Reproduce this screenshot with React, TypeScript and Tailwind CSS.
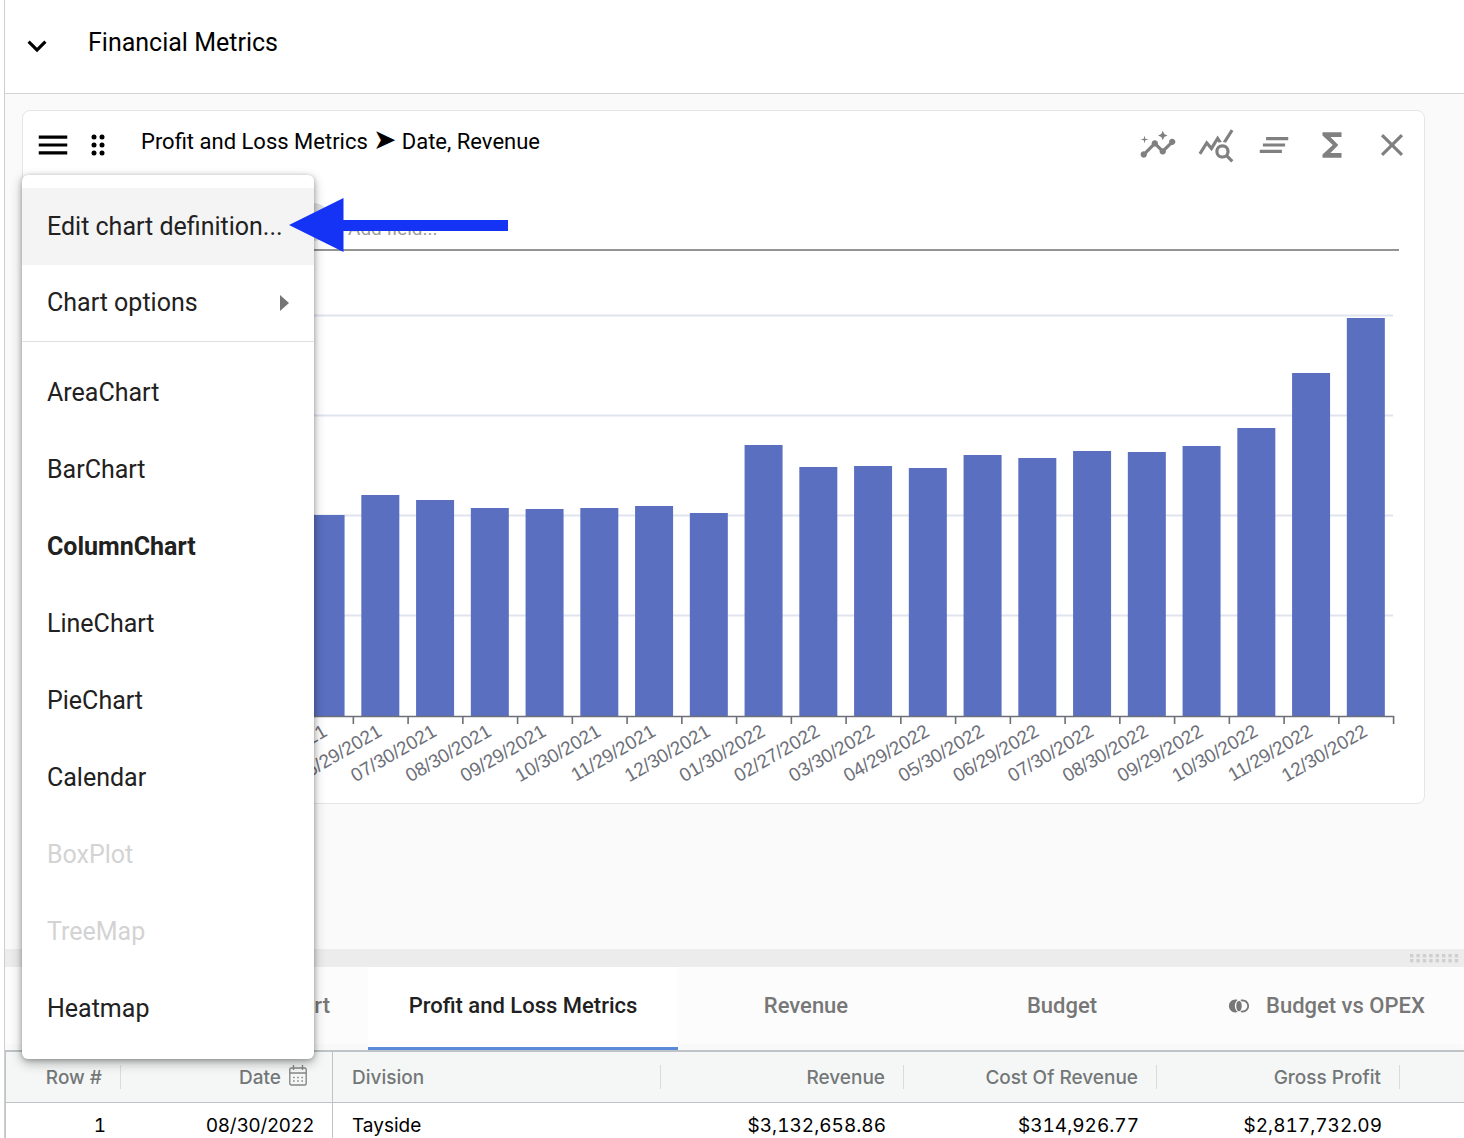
import React from "react";
import {
  MdInsights,
  MdQueryStats,
  MdClearAll,
  MdFunctions,
  MdClose,
  MdJoinLeft,
  MdMenu,
  MdExpandMore,
} from "react-icons/md";

type Bar = { date: string; top: number };

const bars: Bar[] = [
  { date: "01/30/2021", top: 530 },
  { date: "02/27/2021", top: 526 },
  { date: "03/30/2021", top: 522 },
  { date: "04/29/2021", top: 518 },
  { date: "05/30/2021", top: 515 },
  { date: "06/29/2021", top: 495 },
  { date: "07/30/2021", top: 500 },
  { date: "08/30/2021", top: 508 },
  { date: "09/29/2021", top: 509 },
  { date: "10/30/2021", top: 508 },
  { date: "11/29/2021", top: 506 },
  { date: "12/30/2021", top: 513 },
  { date: "01/30/2022", top: 445 },
  { date: "02/27/2022", top: 467 },
  { date: "03/30/2022", top: 466 },
  { date: "04/29/2022", top: 468 },
  { date: "05/30/2022", top: 455 },
  { date: "06/29/2022", top: 458 },
  { date: "07/30/2022", top: 451 },
  { date: "08/30/2022", top: 452 },
  { date: "09/29/2022", top: 446 },
  { date: "10/30/2022", top: 428 },
  { date: "11/29/2022", top: 373 },
  { date: "12/30/2022", top: 318 },
];

const AXIS_LEFT = 80;
const AXIS_RIGHT = 1394;
const AXIS_Y = 716;
const STEP = (AXIS_RIGHT - AXIS_LEFT) / bars.length;

function ColumnChart() {
  return (
    <svg
      viewBox="23 251 1401 552"
      className="block w-full overflow-visible"
      role="img"
      aria-label="Revenue by date"
    >
      {[315, 415, 515, 615].map((y) => (
        <line key={y} x1={AXIS_LEFT} x2={1393} y1={y + 0.5} y2={y + 0.5} stroke="#e0e4ee" strokeWidth="2" />
      ))}
      {bars.map((bar, i) => (
        <rect
          key={bar.date}
          x={AXIS_LEFT + STEP * (i + 0.5) - 19.8}
          y={bar.top}
          width="38"
          height={AXIS_Y - bar.top}
          fill="#5a6fc0"
        />
      ))}
      <line x1={AXIS_LEFT} x2={AXIS_RIGHT} y1={716.5} y2={716.5} stroke="#6e7079" strokeWidth="1.6" />
      {Array.from({ length: bars.length + 1 }, (_, i) => {
        const x = AXIS_LEFT + STEP * i - 0.4;
        return <line key={i} x1={x} x2={x} y1="716" y2="724" stroke="#6e7079" strokeWidth="1.6" />;
      })}
      {bars.map((bar, i) => (
        <text
          key={bar.date}
          transform={`translate(${AXIS_LEFT + STEP * (i + 0.5) + 2} 735) rotate(-30)`}
          textAnchor="end"
          fill="#6e7079"
          className="font-['Liberation_Sans',sans-serif] text-[19px]"
        >
          {bar.date}
        </text>
      ))}
    </svg>
  );
}

function DragDots() {
  return (
    <svg width="14" height="22" viewBox="0 0 14 22" aria-hidden="true">
      {[3, 11].map((x) => [3, 11, 19].map((y) => <circle key={`${x}-${y}`} cx={x} cy={y} r="2.5" />))}
    </svg>
  );
}

function CalendarIcon() {
  return (
    <svg
      className="-mt-1.5"
      width="18"
      height="21"
      viewBox="0 0 18 21"
      fill="none"
      stroke="#858888"
      strokeWidth="1.4"
      aria-hidden="true"
    >
      <rect x="0.8" y="3" width="16.4" height="17" rx="1.5" />
      <path d="M0.8 8H17.2M4.5 0V5M13.5 0V5" />
      <path d="M4 12.5H14.5M4 16H14.5" strokeWidth="1.6" strokeDasharray="1.6 2.6" />
    </svg>
  );
}

function GripDots() {
  return (
    <svg width="49" height="9" viewBox="0 0 49 9" fill="#cfcfcf" aria-hidden="true">
      {[0, 1, 2, 3, 4, 5, 6, 7].map((i) =>
        [0, 5].map((y) => <rect key={`${i}-${y}`} x={i * 6.4} y={y} width="3.4" height="3.4" />)
      )}
    </svg>
  );
}

function MenuItem({ label, bold, disabled }: { label: string; bold?: boolean; disabled?: boolean }) {
  return (
    <button
      role="menuitem"
      disabled={disabled}
      className={`flex h-[77px] w-full items-center px-[25px] text-left text-[25px] ${
        bold ? "font-bold" : ""
      } ${disabled ? "text-[#d3d3d3]" : "text-[#212121]"}`}
    >
      {label}
    </button>
  );
}

function ChartMenu() {
  return (
    <div
      role="menu"
      className="absolute top-16 -left-px z-10 w-[292px] rounded-md bg-white pt-[13px] pb-3 shadow-[0_4px_12px_rgba(0,0,0,0.3),0_1px_5px_rgba(0,0,0,0.25)]"
    >
      <div className="relative">
        <button
          role="menuitem"
          className="flex h-[77px] w-full items-center bg-[#f4f4f4] px-[25px] text-left text-[25px] whitespace-nowrap text-[#212121]"
        >
          Edit chart definition...
        </button>
        <svg
          className="absolute top-[10px] left-[267px]"
          width="219"
          height="54"
          viewBox="0 0 219 54"
          fill="#1433f5"
          aria-hidden="true"
        >
          <path d="M0 27L54.5 0V22H219V33H54.5V54Z" />
        </svg>
      </div>
      <button
        role="menuitem"
        className="flex h-[77px] w-full items-center justify-between border-b border-[#dedede] px-[25px] text-[25px] text-[#212121]"
      >
        Chart options
        <svg width="9" height="16" viewBox="0 0 9 16" fill="#757575" aria-hidden="true">
          <path d="M0 0L9 8L0 16Z" />
        </svg>
      </button>
      <div className="pt-3">
        <MenuItem label="AreaChart" />
        <MenuItem label="BarChart" />
        <MenuItem label="ColumnChart" bold />
        <MenuItem label="LineChart" />
        <MenuItem label="PieChart" />
        <MenuItem label="Calendar" />
        <MenuItem label="BoxPlot" disabled />
        <MenuItem label="TreeMap" disabled />
        <MenuItem label="Heatmap" />
      </div>
    </div>
  );
}

function ChartCard() {
  return (
    <section className="relative mr-[39px] ml-[17px] rounded-lg border border-[#e6e6e6] bg-white">
      <header className="flex h-[68px] items-center pr-[13px] pl-[11px]">
        <button aria-label="Chart menu" aria-haspopup="menu">
          <MdMenu size={38} />
        </button>
        <button aria-label="Move chart" className="ml-[19px]">
          <DragDots />
        </button>
        <h2 className="ml-9 pb-2 text-[22px]">
          Profit and Loss Metrics <span className="text-[28px] leading-none">➤</span> Date, Revenue
        </h2>
        <div className="ml-auto flex items-center gap-5 text-[#808080]">
          <button aria-label="Insights"><MdInsights size={38} /></button>
          <button aria-label="Query statistics"><MdQueryStats size={38} /></button>
          <button aria-label="Clear all"><MdClearAll size={38} /></button>
          <button aria-label="Totals"><MdFunctions size={38} /></button>
          <button aria-label="Close" className="pl-0.5"><MdClose size={38} /></button>
        </div>
      </header>
      <div className="mr-[25px] ml-6 flex h-[72px] items-end border-b-2 border-[#949494] pb-2">
        <span className="h-[38px] w-[285px] rounded-full bg-[#e0e0e0]" />
        <input
          aria-label="Add field"
          placeholder="Add field..."
          className="ml-4 h-6 flex-1 text-[19px] outline-none placeholder:text-[#9b9b9b]"
        />
      </div>
      <ColumnChart />
      <ChartMenu />
    </section>
  );
}

const tabClass =
  "flex min-w-[256px] shrink-0 items-center justify-center border-b-[6px] border-[#f9f9f9] px-[38px] text-[22px] font-medium text-[#777777]";

function Tabs() {
  return (
    <div role="tablist" className="flex h-[83px] shrink-0 overflow-hidden bg-[#fcfcfc]">
      <button role="tab" aria-selected="false" className={`${tabClass} w-[363px]`}>
        <span className="ml-auto">Chart</span>
      </button>
      <button
        role="tab"
        aria-selected="true"
        className="flex w-[310px] shrink-0 items-center justify-center border-b-[3px] border-[#5b8ad9] bg-white pb-[3px] text-[22px] font-medium text-[#212121]"
      >
        Profit and Loss Metrics
      </button>
      <button role="tab" aria-selected="false" className={tabClass}>Revenue</button>
      <button role="tab" aria-selected="false" className={tabClass}>Budget</button>
      <button role="tab" aria-selected="false" className={`${tabClass} gap-4`}>
        <MdJoinLeft size={22} />
        Budget vs OPEX
      </button>
    </div>
  );
}

const headCell = "h-[51px] border-b border-[#bdc3c7] p-0 font-medium";
const headRight = "flex h-6 items-center justify-end border-r border-[#d9dcde] pt-[3px] pr-[18px]";

function DataTable() {
  return (
    <table className="w-full table-fixed border-separate border-spacing-0 border-t-2 border-l border-[#bdc3c7] font-[Inter,sans-serif] text-[19px]">
      <colgroup>
        <col className="w-[115px]" />
        <col className="w-[212px]" />
        <col className="w-[328px]" />
        <col className="w-[243px]" />
        <col className="w-[253px]" />
        <col className="w-[243px]" />
        <col />
      </colgroup>
      <thead className="bg-[#f5f7f7] text-[#747777]">
        <tr>
          <th className={headCell}><div className={headRight}>Row #</div></th>
          <th className={`${headCell} border-r`}>
            <div className="flex items-center justify-end gap-2 pt-[3px] pr-[25px]">
              Date
              <CalendarIcon />
            </div>
          </th>
          <th className={headCell}>
            <div className="flex h-6 items-center border-r border-[#d9dcde] pt-[3px] pl-[19px]">Division</div>
          </th>
          <th className={headCell}><div className={headRight}>Revenue</div></th>
          <th className={headCell}><div className={headRight}>Cost Of Revenue</div></th>
          <th className={headCell}><div className={headRight}>Gross Profit</div></th>
          <th className={headCell} aria-label="More columns" />
        </tr>
      </thead>
      <tbody className="bg-white text-right text-black tabular-nums">
        <tr className="h-[47px]">
          <td className="pr-[15px]">1</td>
          <td className="border-r border-[#bdc3c7] pr-[18px] normal-nums">08/30/2022</td>
          <td className="pl-[19px] text-left">Tayside</td>
          <td className="pr-[18px]">$3,132,658.86</td>
          <td className="pr-[18px]">$314,926.77</td>
          <td className="pr-[18px]">$2,817,732.09</td>
          <td />
        </tr>
      </tbody>
    </table>
  );
}

export default function App() {
  return (
    <div className="h-screen overflow-hidden bg-white pl-1 font-[Roboto,sans-serif] text-black">
      <div className="flex h-full flex-col border-l border-[#cfcfcf] bg-[#fafafa]">
        <header className="flex h-[94px] shrink-0 items-center border-b border-[#d4d4d4] bg-white pb-2 pl-[13px]">
          <button aria-label="Collapse section" className="pt-1.5">
            <MdExpandMore size={38} />
          </button>
          <h1 className="ml-8 text-[25px]">Financial Metrics</h1>
        </header>
        <main className="h-[855px] shrink-0 pt-4">
          <ChartCard />
        </main>
        <div className="flex h-[18px] shrink-0 items-center justify-end bg-[#ececec] pr-[5px]">
          <GripDots />
        </div>
        <Tabs />
        <DataTable />
      </div>
    </div>
  );
}
